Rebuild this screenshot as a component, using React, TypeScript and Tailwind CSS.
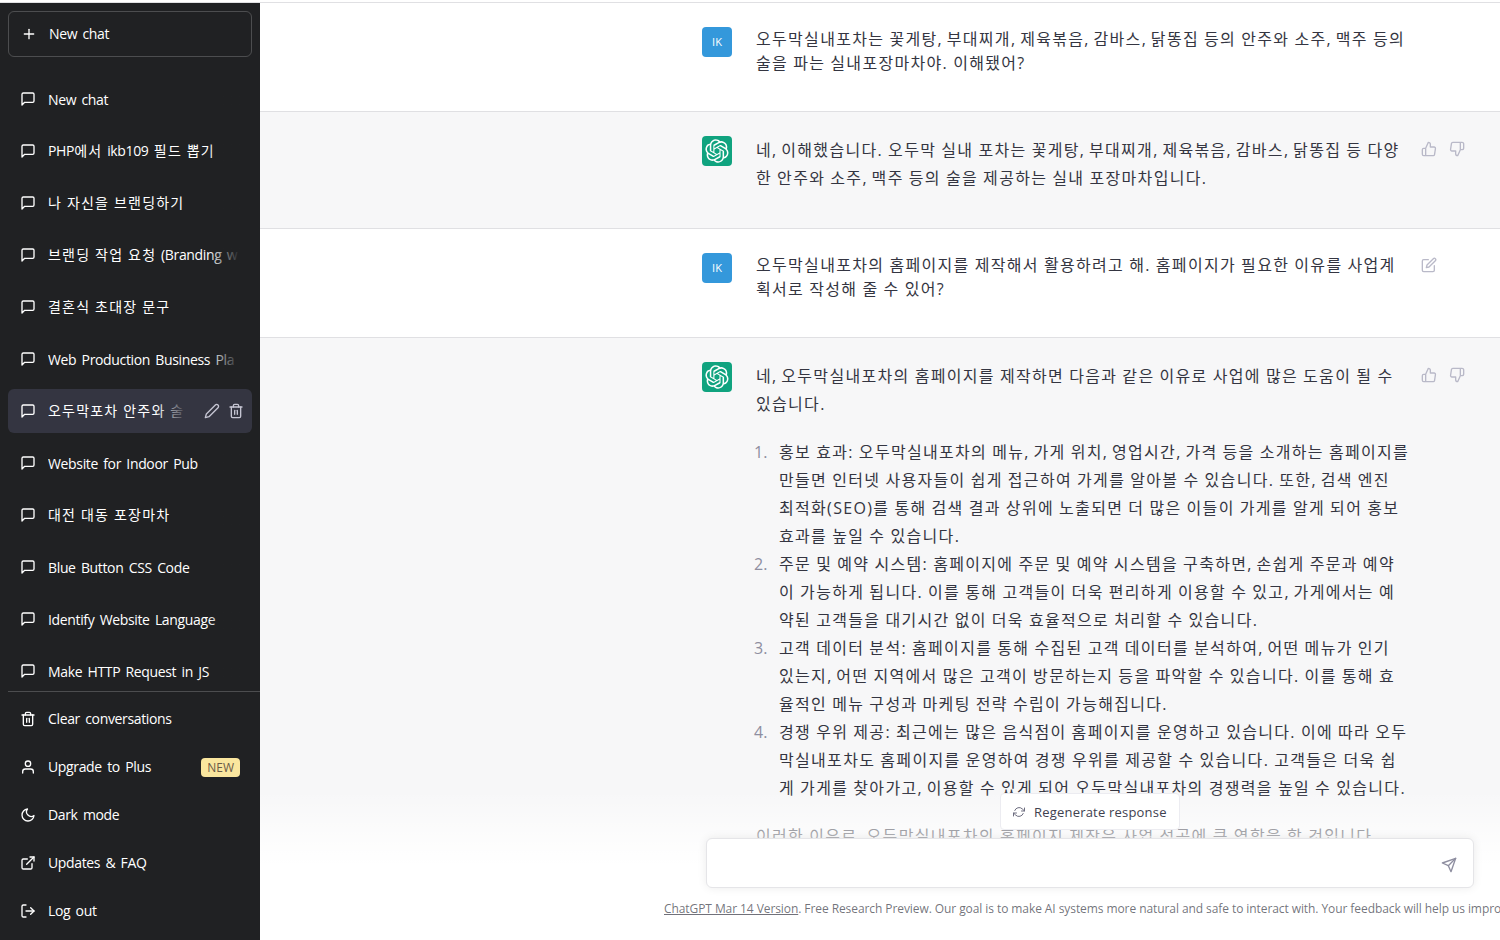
import React from "react";
import { FiMessageSquare, FiPlus, FiTrash2, FiUser, FiMoon, FiExternalLink, FiLogOut, FiEdit2, FiThumbsUp, FiThumbsDown, FiEdit, FiSend, FiRefreshCw } from "react-icons/fi";

const LOGO = "M37.5324 16.8707C37.9808 15.5241 38.1363 14.0974 37.9886 12.6859C37.8409 11.2744 37.3934 9.91076 36.676 8.68622C35.6126 6.83404 33.9882 5.3676 32.0373 4.4985C30.0864 3.62941 27.9098 3.40259 25.8215 3.85078C24.8796 2.7893 23.7219 1.94125 22.4257 1.36341C21.1295 0.785575 19.7249 0.491269 18.3058 0.500197C16.1708 0.495044 14.0893 1.16803 12.3614 2.42214C10.6335 3.67624 9.34853 5.44666 8.6917 7.47815C7.30085 7.76286 5.98686 8.3414 4.8377 9.17505C3.68854 10.0087 2.73073 11.0782 2.02839 12.312C0.956464 14.1591 0.498905 16.2988 0.721698 18.4228C0.944492 20.5467 1.83612 22.5449 3.268 24.1293C2.81966 25.4759 2.66413 26.9026 2.81182 28.3141C2.95951 29.7256 3.40701 31.0892 4.12437 32.3138C5.18791 34.1659 6.8123 35.6322 8.76321 36.5013C10.7141 37.3704 12.8907 37.5973 14.9789 37.1492C15.9208 38.2107 17.0786 39.0587 18.3747 39.6366C19.6709 40.2144 21.0755 40.5087 22.4946 40.4998C24.6307 40.5054 26.7133 39.8321 28.4418 38.5772C30.1704 37.3223 31.4556 35.5506 32.1119 33.5179C33.5027 33.2332 34.8167 32.6547 35.9659 31.821C37.115 30.9874 38.0728 29.9178 38.7752 28.684C39.8458 26.8371 40.3023 24.6979 40.0789 22.5748C39.8556 20.4517 38.9639 18.4544 37.5324 16.8707ZM22.4978 37.8849C20.7443 37.8874 19.0459 37.2733 17.6994 36.1501C17.7601 36.117 17.8666 36.0586 17.936 36.0161L25.9004 31.4156C26.1003 31.3019 26.2663 31.137 26.3813 30.9378C26.4964 30.7386 26.5563 30.5124 26.5549 30.2825V19.0542L29.9213 20.998C29.9389 21.0068 29.9541 21.0198 29.9656 21.0359C29.977 21.052 29.9842 21.0707 29.9867 21.0902V30.3889C29.9842 32.375 29.1946 34.2791 27.7909 35.6841C26.3872 37.0892 24.4838 37.8806 22.4978 37.8849ZM6.39227 31.0064C5.51397 29.4888 5.19742 27.7107 5.49804 25.9832C5.55718 26.0187 5.66048 26.0818 5.73461 26.1244L13.699 30.7248C13.8975 30.8408 14.1233 30.902 14.3532 30.902C14.583 30.902 14.8088 30.8408 15.0073 30.7248L24.731 25.1103V28.9979C24.7321 29.0177 24.7283 29.0376 24.7199 29.0556C24.7115 29.0736 24.6988 29.0893 24.6829 29.1012L16.6317 33.7497C14.9096 34.7416 12.8643 35.0097 10.9447 34.4954C9.02506 33.9811 7.38785 32.7263 6.39227 31.0064ZM4.29707 13.6194C5.17156 12.0998 6.55279 10.9364 8.19885 10.3327C8.19885 10.4013 8.19491 10.5228 8.19491 10.6071V19.808C8.19351 20.0378 8.25334 20.2638 8.36823 20.4629C8.48312 20.6619 8.64893 20.8267 8.84863 20.9404L18.5723 26.5542L15.206 28.4979C15.1894 28.5089 15.1703 28.5155 15.1505 28.5173C15.1307 28.5191 15.1107 28.516 15.0924 28.5082L7.04046 23.8557C5.32135 22.8601 4.06716 21.2235 3.55289 19.3046C3.03862 17.3858 3.30624 15.3413 4.29707 13.6194ZM31.955 20.0556L22.2312 14.4411L25.5976 12.4981C25.6142 12.4872 25.6333 12.4805 25.6531 12.4787C25.6729 12.4769 25.6928 12.4801 25.7111 12.4879L33.7631 17.1364C34.9967 17.849 36.0017 18.8982 36.6606 20.1613C37.3194 21.4244 37.6047 22.849 37.4832 24.2684C37.3617 25.6878 36.8382 27.0432 35.9743 28.1759C35.1103 29.3086 33.9415 30.1717 32.6047 30.6641C32.6047 30.5947 32.6047 30.4733 32.6047 30.3889V21.188C32.6066 20.9586 32.5474 20.7328 32.4332 20.5338C32.319 20.3348 32.154 20.1698 31.955 20.0556ZM35.3055 15.0128C35.2464 14.9765 35.1431 14.9142 35.069 14.8717L27.1045 10.2712C26.906 10.1554 26.6803 10.0943 26.4504 10.0943C26.2206 10.0943 25.9948 10.1554 25.7963 10.2712L16.0726 15.8858V11.9982C16.0715 11.9783 16.0753 11.9585 16.0837 11.9405C16.0921 11.9225 16.1048 11.9068 16.1207 11.8949L24.1719 7.25025C25.4053 6.53903 26.8158 6.19376 28.2383 6.25482C29.6608 6.31589 31.0364 6.78077 32.2044 7.59508C33.3723 8.40939 34.2842 9.53945 34.8334 10.8531C35.3826 12.1667 35.5464 13.6095 35.3055 15.0128ZM14.2424 21.9419L10.8752 19.9981C10.8576 19.9893 10.8423 19.9763 10.8309 19.9602C10.8195 19.9441 10.8122 19.9254 10.8098 19.9058V10.6071C10.8107 9.18295 11.2173 7.78848 11.9819 6.58696C12.7466 5.38544 13.8377 4.42659 15.1275 3.82264C16.4173 3.21869 17.8524 2.99464 19.2649 3.1767C20.6775 3.35876 22.0089 3.93941 23.1034 4.85067C23.0427 4.88379 22.937 4.94215 22.8668 4.98473L14.9024 9.58517C14.7025 9.69878 14.5366 9.86356 14.4215 10.0626C14.3065 10.2616 14.2466 10.4877 14.2479 10.7175L14.2424 21.9419ZM16.071 17.9991L20.4018 15.4978L24.7325 17.9975V22.9985L20.4018 25.4983L16.071 22.9985V17.9991Z";

const titles = ["New chat", "PHP에서 ikb109 필드 뽑기", "나 자신을 브랜딩하기", "브랜딩 작업 요청 (Branding w", "결혼식 초대장 문구", "Web Production Business Pla", "오두막포차 안주와 술", "Website for Indoor Pub", "대전 대동 포장마차", "Blue Button CSS Code", "Identify Website Language", "Make HTTP Request in JS"];

function Mixed({ text }: { text: string }) {
  const parts = text.split(/([가-힣][가-힣 ]*)/).filter(Boolean);
  return (
    <>
      {parts.map((p, i) =>
        /[가-힣]/.test(p) ? (
          <span key={i} className="tracking-[1.2px]">{p}</span>
        ) : (
          <span key={i} className="tracking-[-0.35px] [word-spacing:2px]">{p}</span>
        )
      )}
    </>
  );
}

function Line({ text, tall }: { text: string; tall?: boolean }) {
  const parts = text.split(/(,)/);
  return (
    <div className={tall ? "leading-7" : "leading-6"}>
      {parts.map((p, i) => (p === "," ? <span key={i} className="tracking-normal">,</span> : <span key={i}>{p}</span>))}
    </div>
  );
}

function ChatItem({ title, active }: { title: string; active: boolean }) {
  return (
    <div className={"flex h-11 shrink-0 items-center gap-3 rounded-md pl-3 " + (active ? "bg-[#343541] pr-2" : "pr-3")}>
      <FiMessageSquare size={16} className="shrink-0" />
      <div className={"relative flex-1 overflow-hidden whitespace-nowrap " + (/[가-힣]/.test(title) ? "" : "pt-px")}>
        <Mixed text={title} />
        <div className={"absolute inset-y-0 right-0 w-8 bg-gradient-to-l " + (active ? "from-[#343541]" : "from-[#202123]")} />
      </div>
      {active && (
        <div className="flex items-center gap-2 pl-1 text-[#c5c5d2]">
          <FiEdit2 size={16} />
          <FiTrash2 size={16} />
        </div>
      )}
    </div>
  );
}

function MenuItem({ icon, label, badge }: { icon: React.ReactNode; label: string; badge?: boolean }) {
  return (
    <div className="flex h-12 items-center gap-3 pl-3 pr-5">
      {icon}
      <span className="flex-1 tracking-[-0.35px] [word-spacing:2px]">{label}</span>
      {badge && <span className="rounded-[4px] bg-[#fae69e] px-1.5 py-px text-xs leading-[17px] tracking-normal text-[#6b5a47]">NEW</span>}
    </div>
  );
}

function UserAvatar() {
  return <div className="flex h-[30px] w-[30px] shrink-0 items-center justify-center rounded-sm bg-[#3498db] text-[11px] tracking-normal text-white">IK</div>;
}

function BotAvatar() {
  return (
    <div className="flex h-[30px] w-[30px] shrink-0 items-center justify-center rounded-sm bg-[#10a37f]">
      <svg width="24" height="24" viewBox="0 0 41 41" fill="#fff"><path d={LOGO} /></svg>
    </div>
  );
}

function Thumbs() {
  return (
    <div className="flex gap-3 pt-[5px] text-[#b9b9c8]">
      <FiThumbsUp size={16} />
      <FiThumbsDown size={16} />
    </div>
  );
}

function Row({ gray, avatar, side, children }: { gray?: boolean; avatar: React.ReactNode; side?: React.ReactNode; children: React.ReactNode }) {
  return (
    <div className={"flex shrink-0 border-b border-[#e0e0e3] pb-9 pl-[442px] pt-6 " + (gray ? "bg-[#f7f7f8]" : "bg-white")}>
      {avatar}
      <div className="ml-6 w-[652px] shrink-0 whitespace-nowrap tracking-[1.32px] [word-spacing:-0.4px]">{children}</div>
      <div className="ml-[13px]">{side}</div>
    </div>
  );
}

const list = [
  ["홍보 효과: 오두막실내포차의 메뉴, 가게 위치, 영업시간, 가격 등을 소개하는 홈페이지를", "만들면 인터넷 사용자들이 쉽게 접근하여 가게를 알아볼 수 있습니다. 또한, 검색 엔진", "최적화(SEO)를 통해 검색 결과 상위에 노출되면 더 많은 이들이 가게를 알게 되어 홍보", "효과를 높일 수 있습니다."],
  ["주문 및 예약 시스템: 홈페이지에 주문 및 예약 시스템을 구축하면, 손쉽게 주문과 예약", "이 가능하게 됩니다. 이를 통해 고객들이 더욱 편리하게 이용할 수 있고, 가게에서는 예", "약된 고객들을 대기시간 없이 더욱 효율적으로 처리할 수 있습니다."],
  ["고객 데이터 분석: 홈페이지를 통해 수집된 고객 데이터를 분석하여, 어떤 메뉴가 인기", "있는지, 어떤 지역에서 많은 고객이 방문하는지 등을 파악할 수 있습니다. 이를 통해 효", "율적인 메뉴 구성과 마케팅 전략 수립이 가능해집니다."],
  ["경쟁 우위 제공: 최근에는 많은 음식점이 홈페이지를 운영하고 있습니다. 이에 따라 오두", "막실내포차도 홈페이지를 운영하여 경쟁 우위를 제공할 수 있습니다. 고객들은 더욱 쉽", "게 가게를 찾아가고, 이용할 수 있게 되어 오두막실내포차의 경쟁력을 높일 수 있습니다."],
];

export default function App() {
  return (
    <div className="flex h-[940px] w-[1500px] flex-col overflow-hidden bg-white font-['Open_Sans','Noto_Sans_CJK_KR',sans-serif] text-[#343541]">
      <div className="h-[3px] shrink-0 border-b border-[#e0e0e3]" />
      <div className="flex min-h-0 flex-1">
        <aside className="flex w-[260px] shrink-0 flex-col bg-[#202123] text-sm leading-5 text-white">
          <div className="mx-2 mt-2 flex h-[46px] shrink-0 items-center gap-3 rounded-md border border-white/20 px-3">
            <FiPlus size={16} />
            <span className="tracking-[-0.35px] [word-spacing:2px]">New chat</span>
          </div>
          <div className="mt-5 flex min-h-0 flex-1 flex-col gap-2 overflow-hidden px-2">
            {titles.map((t, i) => <ChatItem key={i} title={t} active={i === 6} />)}
          </div>
          <div className="ml-2 border-t border-white/20 pb-[5px] pt-[3px]">
            <MenuItem icon={<FiTrash2 size={16} />} label="Clear conversations" />
            <MenuItem icon={<FiUser size={16} />} label="Upgrade to Plus" badge />
            <MenuItem icon={<FiMoon size={16} />} label="Dark mode" />
            <MenuItem icon={<FiExternalLink size={16} />} label="Updates & FAQ" />
            <MenuItem icon={<FiLogOut size={16} />} label="Log out" />
          </div>
        </aside>
        <main className="relative min-w-0 flex-1 overflow-hidden">
          <div className="flex h-full flex-col text-base">
            <Row avatar={<UserAvatar />}>
              <Line text="오두막실내포차는 꽃게탕, 부대찌개, 제육볶음, 감바스, 닭똥집 등의 안주와 소주, 맥주 등의" />
              <Line text="술을 파는 실내포장마차야. 이해됐어?" />
            </Row>
            <Row gray avatar={<BotAvatar />} side={<Thumbs />}>
              <Line tall text="네, 이해했습니다. 오두막 실내 포차는 꽃게탕, 부대찌개, 제육볶음, 감바스, 닭똥집 등 다양" />
              <Line tall text="한 안주와 소주, 맥주 등의 술을 제공하는 실내 포장마차입니다." />
            </Row>
            <Row avatar={<UserAvatar />} side={<div className="pt-[4px] text-[#b9b9c8]"><FiEdit size={16} /></div>}>
              <Line text="오두막실내포차의 홈페이지를 제작해서 활용하려고 해. 홈페이지가 필요한 이유를 사업계" />
              <Line text="획서로 작성해 줄 수 있어?" />
            </Row>
            <Row gray avatar={<BotAvatar />} side={<Thumbs />}>
              <Line tall text="네, 오두막실내포차의 홈페이지를 제작하면 다음과 같은 이유로 사업에 많은 도움이 될 수" />
              <Line tall text="있습니다." />
              <ol className="mt-5">
                {list.map((lines, i) => (
                  <li key={i} className="flex">
                    <span className="-ml-[2px] mr-[2px] w-[23px] shrink-0 leading-7 tracking-normal text-[#8e8ea0]">{i + 1}.</span>
                    <div>{lines.map((l, j) => <Line key={j} tall text={l} />)}</div>
                  </li>
                ))}
              </ol>
              <div className="mt-5"><Line tall text="이러한 이유로, 오두막실내포차의 홈페이지 제작은 사업 성공에 큰 역할을 할 것입니다." /></div>
            </Row>
          </div>
          <div className="absolute inset-x-0 bottom-0 flex h-[150px] flex-col bg-gradient-to-b from-white/0 via-white to-white">
            <div className="ml-[740px] mt-[3px] flex h-[37px] w-[180px] shrink-0 items-center gap-2 rounded-sm border border-[#ececf1] bg-white pl-3 text-[13px] text-[#40414f]">
              <FiRefreshCw size={12} className="text-[#6e6e80]" />
              <span className="ml-px pt-[2px] tracking-[0.2px]">Regenerate response</span>
            </div>
            <div className="ml-[446px] mt-2 flex h-[50px] w-[768px] shrink-0 items-center justify-end rounded-md border border-[#e5e5e8] bg-white pr-4 shadow-[0_0_10px_rgba(0,0,0,0.08)]">
              <FiSend size={16} className="translate-y-[2px] text-[#8e8ea0]" />
            </div>
            <div className="ml-[404px] mt-[13px] whitespace-nowrap text-xs leading-4 tracking-[-0.08px] text-[#343541]/70">
              <span className="underline">ChatGPT Mar 14 Version</span>. Free Research Preview. Our goal is to make AI systems more natural and safe to interact with. Your feedback will help us improve.
            </div>
          </div>
        </main>
      </div>
    </div>
  );
}
